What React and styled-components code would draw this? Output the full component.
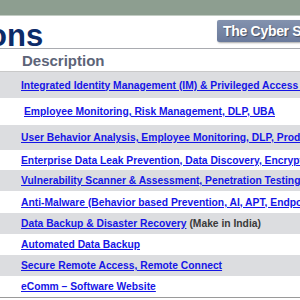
import React from "react";
import styled, { createGlobalStyle } from "styled-components";

const Global = createGlobalStyle`
  html, body { margin: 0; padding: 0; background: #ffffff; }
  body { font-family: "Liberation Sans", Arial, sans-serif; overflow: hidden; }
`;

const Page = styled.div`
  width: 300px;
  height: 300px;
  overflow: hidden;
  background: #fff;
`;

const TopBar = styled.div`
  height: 15px;
  background: #8d9e90;
  border-bottom: 1px solid #c3ccc4;
`;

const Header = styled.div`
  display: flex;
  align-items: flex-start;
  justify-content: space-between;
  height: 32px;
  border-bottom: 1px solid #a9abb0;
`;

const Title = styled.h1`
  margin: 3px 0 0 -98px;
  font-size: 31px;
  font-weight: 700;
  color: #0c2b69;
  line-height: 34px;
  white-space: nowrap;
`;

const Tab = styled.div`
  margin-top: 4px;
  height: 22px;
  width: 77px;
  padding-left: 6px;
  background: linear-gradient(#8392ae, #6a7a9b);
  box-shadow: 1px 1px 2px rgba(0, 0, 0, 0.35);
  border-radius: 2px 0 0 2px;
  color: #fff;
  font-size: 14px;
  letter-spacing: -0.3px;
  font-weight: 700;
  line-height: 22px;
  white-space: nowrap;
  overflow: hidden;
  text-shadow: 1px 1px 1px rgba(0, 0, 0, 0.4);
`;

const Table = styled.div`
  display: flex;
  flex-direction: column;
  border-bottom: 1px solid #9a9a9a;
`;

const HeadRow = styled.div`
  height: 22px;
  padding-left: 22px;
  display: flex;
  align-items: center;
  font-size: 15px;
  font-weight: 700;
  color: #5c6478;
  border-bottom: 1px solid #c9c9c9;
`;

const Row = styled.div`
  height: ${(p) => p.$h}px;
  background: ${(p) => (p.$shade ? "#dcdde0" : "#ffffff")};
  display: flex;
  align-items: center;
  padding-left: ${(p) => p.$indent}px;
  white-space: nowrap;
  font-size: 10.3px;
  font-weight: 700;
`;

const Link = styled.a`
  color: #1515e6;
  text-decoration: underline;
`;

const Note = styled.span`
  color: #3a3a3a;
  margin-left: 3px;
`;

const rows = [
  { t: "Integrated Identity Management (IM) & Privileged Access Management (PAM)", h: 26 },
  { t: "Employee Monitoring, Risk Management, DLP, UBA", h: 27, indent: 24 },
  { t: "User Behavior Analysis, Employee Monitoring, DLP, Productivity Monitoring", h: 25 },
  { t: "Enterprise Data Leak Prevention, Data Discovery, Encryption", h: 20 },
  { t: "Vulnerability Scanner & Assessment, Penetration Testing", h: 21 },
  { t: "Anti-Malware (Behavior based Prevention, AI, APT, Endpoint Protection)", h: 22 },
  { t: "Data Backup & Disaster Recovery", note: "(Make in India)", h: 21 },
  { t: "Automated Data Backup", h: 21 },
  { t: "Secure Remote Access, Remote Connect", h: 21 },
  { t: "eComm – Software Website", h: 21 },
];

export default function App() {
  return (
    <Page>
      <Global />
      <TopBar />
      <Header>
        <Title>Solutions</Title>
        <Tab>The Cyber Security</Tab>
      </Header>
      <Table>
        <HeadRow>Description</HeadRow>
        {rows.map((r, i) => (
          <Row key={i} $h={r.h} $shade={i % 2 === 0} $indent={r.indent || 21}>
            <Link href="#">{r.t}</Link>
            {r.note && <Note>{r.note}</Note>}
          </Row>
        ))}
      </Table>
    </Page>
  );
}
